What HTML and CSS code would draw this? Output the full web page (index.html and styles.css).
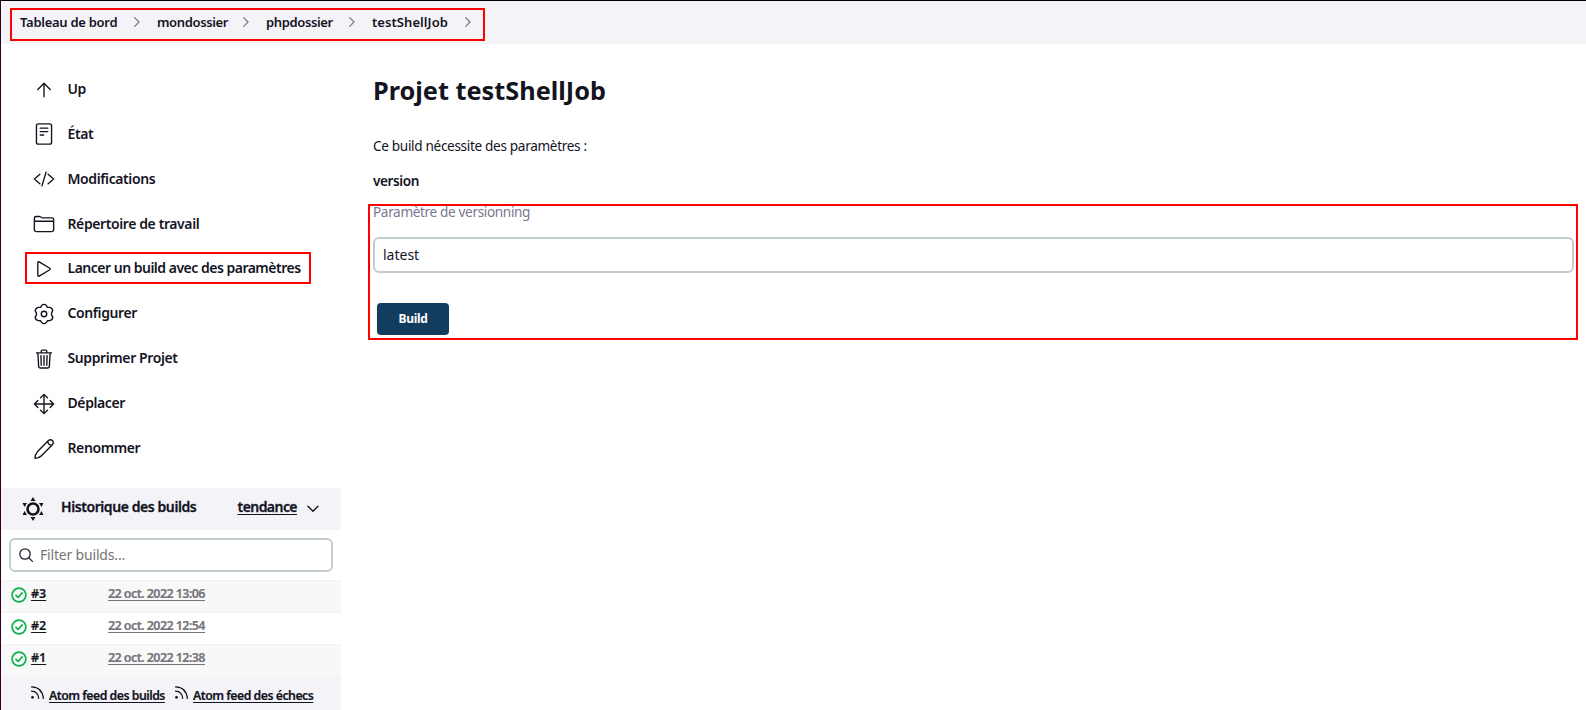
FILE: index.html
```html
<!DOCTYPE html>
<html lang="fr">
<head>
<meta charset="utf-8">
<title>Projet testShellJob</title>
<link rel="stylesheet" href="styles.css">
</head>
<body>
<div class="page">
<header class="breadcrumbs">
  <nav class="trail outline">
    <a class="crumb c1">Tableau de bord</a><svg class="sep" viewBox="0 0 6 10"><path d="M.7.7 5 5 .7 9.3"/></svg>
    <a class="crumb c2">mondossier</a><svg class="sep" viewBox="0 0 6 10"><path d="M.7.7 5 5 .7 9.3"/></svg>
    <a class="crumb c3">phpdossier</a><svg class="sep" viewBox="0 0 6 10"><path d="M.7.7 5 5 .7 9.3"/></svg>
    <a class="crumb c4">testShellJob</a><svg class="sep" viewBox="0 0 6 10"><path d="M.7.7 5 5 .7 9.3"/></svg>
  </nav>
</header>
<div class="columns">
<aside class="side">
  <nav class="tasks">
    <a class="task"><svg viewBox="0 0 512 512"><path d="M112 244 256 100l144 144M256 120v292"/></svg><span>Up</span></a>
    <a class="task"><svg viewBox="0 0 512 512"><rect x="80" y="20" width="352" height="472" rx="44"/><path d="M168 120h176M168 200h176M168 280h80"/></svg><span>État</span></a>
    <a class="task"><svg viewBox="0 0 512 512"><path d="M160 368 32 256l128-112M352 368l128-112-128-112M304 96l-96 320"/></svg><span>Modifications</span></a>
    <a class="task"><svg viewBox="0 0 512 512"><path d="M440 432H72a40 40 0 0 1-40-40V120a40 40 0 0 1 40-40h75.900a40 40 0 0 1 22.200 6.700l27.800 18.600a40 40 0 0 0 22.200 6.700H440a40 40 0 0 1 40 40v240a40 40 0 0 1-40 40ZM32 192h448"/></svg><span>Répertoire de travail</span></a>
    <a class="task current"><svg viewBox="0 0 512 512"><path d="M112 111v290c0 17.400 17 28.500 31 20.200l247.900-148.400c12.100-7.300 12.100-26.200 0-33.500L143 90.800c-14-8.300-31 2.800-31 20.200z"/></svg><span>Lancer un build avec des paramètres</span><i class="task-box outline"></i></a>
    <a class="task"><svg viewBox="0 0 24 24"><circle cx="12" cy="12" r="3"/><path d="M9.400 2.700Q12 .3 14.600 2.700L15.700 4.700 18.200 4.800Q21.600 5.700 21.400 8.600L20.300 11Q20 12 20.300 13L21.600 15.400Q21.400 18.600 18.200 19.200L15.700 19.400 14.600 21.300Q12 23.700 9.400 21.300L8.300 19.400 5.800 19.200Q2.600 18.600 2.400 15.400L3.700 13Q4 12 3.700 11L2.400 8.600Q2.600 5.700 5.800 4.800L8.300 4.700Z"/></svg><span>Configurer</span></a>
    <a class="task"><svg viewBox="0 0 512 512"><path d="m112 112 20 320c1 18.500 14.400 32 32 32h184c17.700 0 30.900-13.500 32-32l20-320M80 112h352M192 112V72a24 24 0 0 1 24-24h80a24 24 0 0 1 24 24v40M256 176v224M184 176l8 224M328 176l-8 224"/></svg><span>Supprimer Projet</span></a>
    <a class="task"><svg viewBox="0 0 512 512"><path d="M176 112l80-80 80 80M256 32v448M176 400l80 80 80-80M400 176l80 80-80 80M112 176l-80 80 80 80M32 256h448"/></svg><span>Déplacer</span></a>
    <a class="task"><svg viewBox="0 0 24 24"><path d="M2.200 22.200C2 19 3 17.200 5 14.800L16.600 2.900Q19 .9 21.200 2.800 23.100 5 21.100 7.400L9.500 19.200C7 21.200 5.300 22.400 2.200 22.200ZM16.200 3.300Q16 7.800 20.700 7.800"/></svg><span>Renommer</span></a>
  </nav>
  <section class="history">
    <div class="history-head">
      <svg class="sun" viewBox="0 0 24 26"><circle cx="12" cy="13" r="5.500"/><path d="M12 1l2.500 4h-5ZM12 25l2.500-4h-5ZM1.600 7h4.400L3.500 11ZM22.400 7H18l2.500 4ZM1.600 19H6l-2.500-4ZM22.400 19H18l2.500-4Z"/></svg>
      <strong class="history-title">Historique des builds</strong>
      <a class="trend">tendance</a>
      <svg class="down" viewBox="0 0 12 8"><path d="m1 1.200 5 5 5-5"/></svg>
    </div>
    <div class="filter"><svg viewBox="0 0 14 14"><circle cx="6" cy="6" r="5.200"/><path d="m9.800 9.800 3.600 3.600"/></svg><span>Filter builds...</span></div>
    <div class="build"><svg viewBox="0 0 16 16"><circle cx="8" cy="8" r="6.900"/><path d="m5 8.300 2.100 2.200 4-4.600"/></svg><a class="num">#3</a><a class="date">22 oct. 2022 13:06</a></div>
    <div class="build plain"><svg viewBox="0 0 16 16"><circle cx="8" cy="8" r="6.900"/><path d="m5 8.300 2.100 2.200 4-4.600"/></svg><a class="num">#2</a><a class="date">22 oct. 2022 12:54</a></div>
    <div class="build"><svg viewBox="0 0 16 16"><circle cx="8" cy="8" r="6.900"/><path d="m5 8.300 2.100 2.200 4-4.600"/></svg><a class="num">#1</a><a class="date">22 oct. 2022 12:38</a></div>
    <div class="feeds">
      <svg viewBox="0 0 13 13"><circle cx="1.500" cy="11.300" r="1.400"/><path d="M.5 5.200q6.500.3 7.200 7.300M.5.800q11 .4 11.800 11.700"/></svg><div class="feed"><a>Atom feed des builds</a></div>
      <svg viewBox="0 0 13 13"><circle cx="1.500" cy="11.300" r="1.400"/><path d="M.5 5.200q6.500.3 7.200 7.300M.5.800q11 .4 11.800 11.700"/></svg><div class="feed"><a>Atom feed des échecs</a></div>
    </div>
  </section>
</aside>
<main class="main">
  <h1>Projet testShellJob</h1>
  <p class="intro">Ce build nécessite des paramètres :</p>
  <p class="label">version</p>
  <div class="form outline">
    <p class="help">Paramètre de versionning</p>
    <div class="field">latest</div>
    <button class="submit">Build</button>
  </div>
</main>
</div>
</div>
</body>
</html>
```
FILE: styles.css
```css
* { box-sizing: border-box; }
body { margin: 0; background: #fff; color: #14141f; font: 14px/20px "Noto Sans", "Open Sans", sans-serif; }
svg { display: block; flex: none; fill: none; stroke: currentColor; stroke-linecap: round; stroke-linejoin: round; }
p, h1 { margin: 0; }
span, a, strong { flex: none; white-space: nowrap; }
.page { height: 710px; overflow: hidden; border-top: 1px solid #000; border-left: 1px solid #2c001e; }
.outline { border: 2px solid #f00; }
.breadcrumbs { height: 43px; padding: 7px 0 0 9px; background: #f4f3f8; }
.trail { display: flex; width: 475px; height: 33px; padding-left: 8px; }
.crumb { font-size: 13px; font-weight: 600; line-height: 24px; letter-spacing: -0.36px; }
.c1 { width: 115px; letter-spacing: -0.28px; }
.c2 { width: 86px; }
.c3 { width: 83px; }
.c4 { width: 93px; letter-spacing: 0.07px; }
.sep { width: 6px; height: 10px; margin: 7px 18px 0 -1px; stroke: #777780; stroke-width: 1.2; }
.c2, .c3, .c4 { margin-left: -1px; padding-left: 0; }
.c2 { width: 87px; }
.c3 { width: 84px; }
.c4 { width: 94px; }
.columns { display: flex; }
.side { width: 340px; flex: none; }
.tasks { height: 444px; padding-top: 22.6px; }
.task { position: relative; display: flex; align-items: center; height: 44.88px; padding-left: 32px; gap: 12.5px; font-weight: 600; letter-spacing: -0.4px; }
.task svg { width: 22px; height: 22px; stroke-width: 32; margin-top: 1px; }
.task svg[viewBox="0 0 24 24"] { stroke-width: 1.5; }
.current { letter-spacing: -0.5px; }
.current span { padding-bottom: 2px; }
.task-box { position: absolute; left: 24px; top: 6px; width: 286px; height: 32px; }
.history-head { display: flex; height: 42px; padding-left: 20px; background: #f4f3f8; font-weight: 600; letter-spacing: -0.42px; }
.sun { width: 24px; height: 26px; margin: 8px 16px 0 0; stroke-width: 2.6; }
.sun path { fill: currentColor; stroke: none; }
.history-title { width: 176.5px; line-height: 38px; font-weight: 600; -webkit-text-stroke: 0.3px; }
.trend { margin-right: 10px; line-height: 38px; letter-spacing: -0.55px; text-decoration: underline; text-underline-offset: 2px; -webkit-text-stroke: 0.3px; }
.down { width: 12px; height: 8px; margin-top: 17px; stroke-width: 1.4; }
.filter { display: flex; align-items: center; width: 324px; height: 34px; margin: 8px 0 8px 8px; padding-left: 8px; gap: 7px; border: 2px solid #c3ccd1; border-radius: 6px; color: #757575; letter-spacing: -0.18px; line-height: 18px; }
.filter span { padding-bottom: 1px; }
.filter svg { width: 14px; height: 14px; color: #222230; stroke-width: 1.3; }
.build { display: flex; height: 32px; padding-left: 10px; border-top: 1px solid #f2f2f3; background: #f8f8f8; font-size: 12.5px; font-weight: 600; line-height: 25px; }
.plain { background: #fff; }
.build svg { width: 16px; height: 16px; margin: 6px 4px 0 0; color: #0eb04f; stroke-width: 1.7; }
.build a, .feeds a { text-decoration: underline; text-underline-offset: 2px; }
.num { width: 77px; -webkit-text-stroke: 0.2px; }
.date { color: #73737b; letter-spacing: -0.57px; -webkit-text-stroke: 0.2px; }
.feeds { display: flex; height: 34px; padding-left: 30px; background: #f4f3f8; font-size: 12.3px; font-weight: 600; line-height: 40px; letter-spacing: -0.51px; }
.feeds svg { width: 13px; height: 13px; margin: 10px 5px 0 0; stroke-width: 1.2; }
.feeds circle { fill: currentColor; stroke: none; }
.feed { width: 126px; -webkit-text-stroke: 0.2px; }
.main { flex: 1; padding: 0 8px 0 27px; }
h1 { padding: 26px 0 0 5px; font-size: 25.3px; line-height: 40px; font-weight: 700; }
.intro, .label { padding-left: 5px; }
.intro { margin-top: 26px; font-size: 13.6px; letter-spacing: -0.33px; }
.label { margin-top: 15px; font-size: 13.6px; font-weight: 600; letter-spacing: -0.42px; }
.form { height: 136px; margin-top: 13px; padding: 0 2px 0 3px; }
.help { color: #7b7790; margin-top: -4px; font-size: 13.6px; letter-spacing: -0.36px; }
.field { height: 36px; margin-top: 15px; padding-left: 8px; border: 2px solid #c3ccd1; border-radius: 6px; line-height: 31px; }
.submit { display: block; width: 72px; height: 32px; margin: 30px 0 0 4px; padding: 0; border: 0; border-radius: 4px; background: #133d5f; color: #fff; font: 700 12px/30px "Noto Sans", sans-serif; letter-spacing: -0.3px; }
```
